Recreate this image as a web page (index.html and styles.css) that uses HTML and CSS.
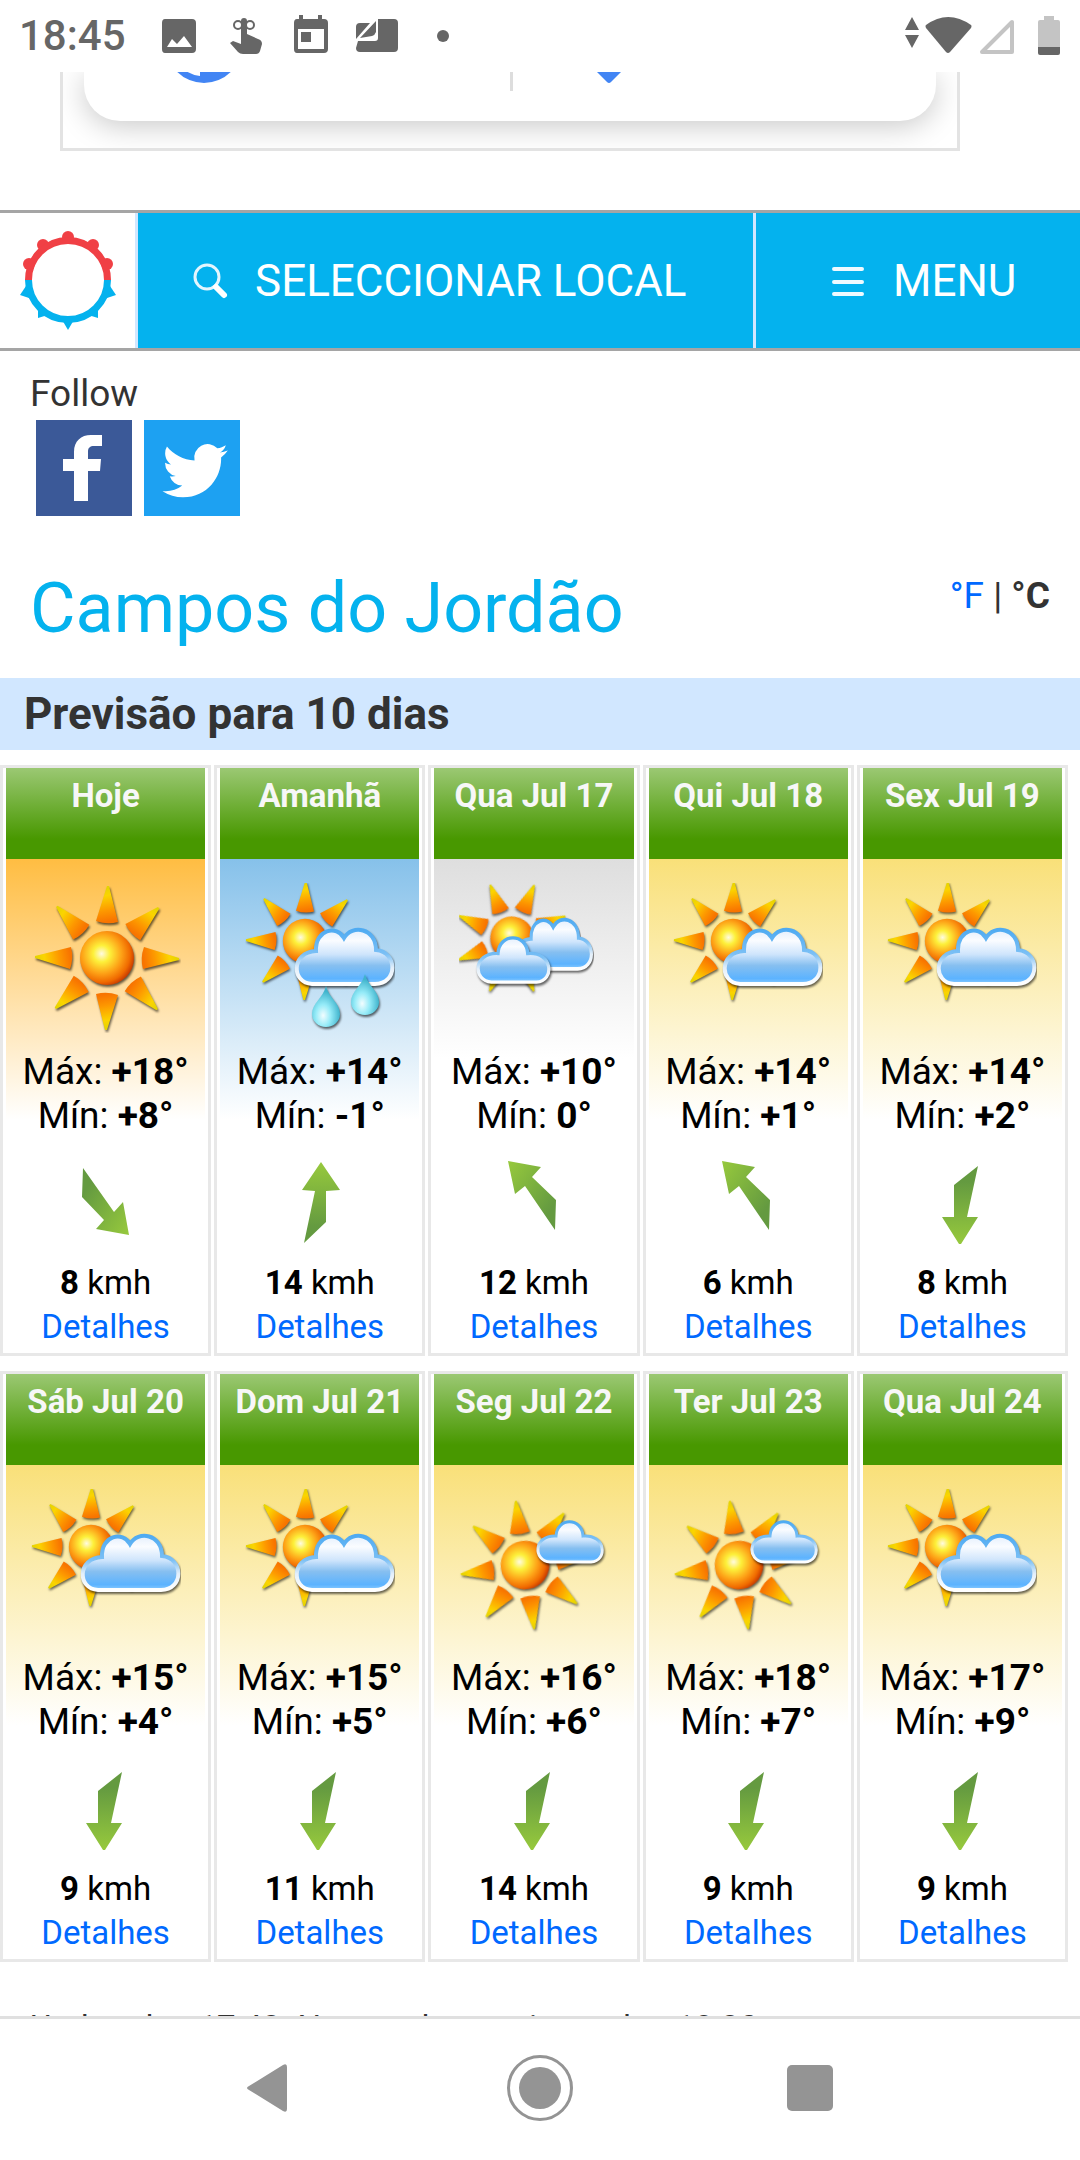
FILE: index.html
```
<!DOCTYPE html>
<html lang="pt">
<head>
    <meta charset="UTF-8">
    <meta name="viewport" content="width=device-width, initial-scale=1.0">
    <title>Campos do Jordão - Previsão para 10 dias</title>
    <link rel="stylesheet" href="styles.css">
</head>
<body>
    <!-- Shared shapes -->
    <svg class="sprite" aria-hidden="true">
        <defs>
            <radialGradient id="ball-fill" cx="0.4" cy="0.42" r="0.62">
                <stop offset="0" stop-color="#fffbe0"/>
                <stop offset="0.25" stop-color="#fdf03a"/>
                <stop offset="0.6" stop-color="#fda016"/>
                <stop offset="0.85" stop-color="#f06a00"/>
                <stop offset="1" stop-color="#c93c00"/>
            </radialGradient>
            <linearGradient id="ray-fill" x1="0" y1="0" x2="0.1" y2="1">
                <stop offset="0" stop-color="#dcd400"/>
                <stop offset="0.3" stop-color="#fbd400"/>
                <stop offset="0.7" stop-color="#fd9800"/>
                <stop offset="1" stop-color="#f87400"/>
            </linearGradient>
            <linearGradient id="cloud-fill" x1="0" y1="0" x2="0" y2="1">
                <stop offset="0" stop-color="#e4effd"/>
                <stop offset="0.2" stop-color="#fafcff"/>
                <stop offset="0.45" stop-color="#cfe5fc"/>
                <stop offset="0.66" stop-color="#86bff0"/>
                <stop offset="0.9" stop-color="#5cb3ff"/>
                <stop offset="1" stop-color="#8cccff"/>
            </linearGradient>
            <linearGradient id="cloud-edge" x1="0" y1="0" x2="0" y2="1">
                <stop offset="0" stop-color="#4fabf2"/>
                <stop offset="0.45" stop-color="#7cc0f5"/>
                <stop offset="0.7" stop-color="#e3effa"/>
                <stop offset="1" stop-color="#ffffff"/>
            </linearGradient>
            <radialGradient id="drop-fill" cx="0.4" cy="0.72" r="0.6">
                <stop offset="0" stop-color="#f2fdff"/>
                <stop offset="0.45" stop-color="#95ebf8"/>
                <stop offset="1" stop-color="#3fb3cc"/>
            </radialGradient>
            <linearGradient id="arrow-up" x1="0" y1="0" x2="0" y2="1">
                <stop offset="0" stop-color="#97c93d"/>
                <stop offset="0.3" stop-color="#84b83e"/>
                <stop offset="0.8" stop-color="#649a40"/>
            </linearGradient>
            <linearGradient id="arrow-down" x1="0" y1="1" x2="0" y2="0">
                <stop offset="0" stop-color="#97c93d"/>
                <stop offset="0.3" stop-color="#84b83e"/>
                <stop offset="0.8" stop-color="#649a40"/>
            </linearGradient>
            <linearGradient id="arrow-nw" x1="0" y1="0" x2="1" y2="1">
                <stop offset="0" stop-color="#97c93d"/>
                <stop offset="0.3" stop-color="#84b83e"/>
                <stop offset="0.8" stop-color="#649a40"/>
            </linearGradient>
            <linearGradient id="arrow-se" x1="1" y1="1" x2="0" y2="0">
                <stop offset="0" stop-color="#97c93d"/>
                <stop offset="0.3" stop-color="#84b83e"/>
                <stop offset="0.8" stop-color="#649a40"/>
            </linearGradient>

            <path id="ray" d="M0 -72H2L11 -36Q0 -33 -11 -37Z" fill="url(#ray-fill)"/>
            <g id="sun-shape">
                <g class="shade">
                    <use href="#ray"/>
                    <use href="#ray" transform="rotate(45)"/>
                    <use href="#ray" transform="rotate(90)"/>
                    <use href="#ray" transform="rotate(135)"/>
                    <use href="#ray" transform="rotate(180)"/>
                    <use href="#ray" transform="rotate(225)"/>
                    <use href="#ray" transform="rotate(270)"/>
                    <use href="#ray" transform="rotate(315)"/>
                    <circle r="27" fill="url(#ball-fill)"/>
                </g>
            </g>
            <path id="cloud-big" class="shade" fill="url(#cloud-fill)" stroke="url(#cloud-edge)" stroke-width="4" d="M67 101C46 100 46 69 71 68C70 46 92 42 99 55C107 41 131 45 131 67C153 69 153 101 130 101Z"/>
            <path id="cloud-small" class="shade" fill="url(#cloud-fill)" stroke="url(#cloud-edge)" stroke-width="3" d="M14 41C-3 40 -3 14 20 15C21 -4 46 -4 47 15C70 13 72 40 55 41Z"/>
            <path id="drop" class="shade" fill="url(#drop-fill)" d="M0 0C3 12 14 17 14 28A14 13 0 0 1 -14 28C-14 17 -3 12 0 0Z"/>
        </defs>

        <symbol id="w-sun" viewBox="0 0 150 150">
            <use href="#sun-shape" transform="translate(76 75)"/>
        </symbol>
        <symbol id="w-sun-cloud" viewBox="0 0 150 150">
            <use href="#sun-shape" transform="translate(60 58) scale(0.82)"/>
            <use href="#cloud-big"/>
        </symbol>
        <symbol id="w-rain" viewBox="0 0 150 150">
            <use href="#sun-shape" transform="translate(60 58) scale(0.82)"/>
            <use href="#cloud-big"/>
            <use href="#drop" transform="translate(81 103)"/>
            <use href="#drop" transform="translate(120 91)"/>
        </symbol>
        <symbol id="w-clouds" viewBox="0 0 150 150">
            <use href="#sun-shape" transform="translate(53 55) rotate(22) scale(0.8)"/>
            <use href="#cloud-big" transform="translate(16 -6) scale(0.79 0.91)"/>
            <use href="#cloud-small" transform="translate(17 54) scale(1.1)"/>
        </symbol>
        <symbol id="w-sun-small-cloud" viewBox="0 0 150 150">
            <use href="#sun-shape" transform="translate(66 76) rotate(-9) scale(0.9)"/>
            <use href="#cloud-small" transform="translate(77 32)"/>
        </symbol>

        <symbol id="wind-up" viewBox="0 0 84 84">
            <path fill="url(#arrow-up)" d="M43 2L62 30L48 31V62L26 83L37 31L24 30Z"/>
        </symbol>
        <symbol id="wind-down" viewBox="0 0 84 84">
            <path fill="url(#arrow-down)" d="M58 6L47 57L58 57L41 84H39L22 57L34 57V25Z"/>
        </symbol>
        <symbol id="wind-nw" viewBox="0 0 84 84">
            <path fill="url(#arrow-nw)" d="M16 1L49 7L40 17L64 40L63 70L33 26L23 34Z"/>
        </symbol>
        <symbol id="wind-se" viewBox="0 0 84 84">
            <path fill="url(#arrow-se)" d="M19 8L50 52L59 42L65 75L32 69L40 60L18 37Z"/>
        </symbol>
    </svg>

    <header class="status-bar">
        <span class="clock">18:45</span>
        <svg class="status-left" viewBox="0 0 290 44" aria-hidden="true">
            <g fill="#666">
                <path fill-rule="evenodd" d="M4 5H31Q35 5 35 9V35Q35 39 31 39H4Q1 39 1 35V9Q1 5 4 5ZM6 33H31L23 22L16 30L11 25Z"/>
                <path d="M80 20V7A3 3 0 0 1 86 7V20L97 25Q101 26 101 30L99 37Q98 40 95 40H82Q79 40 77 38L69 29L72 27L80 30Z"/>
                <path fill-rule="evenodd" d="M138 1H142V5H157V1H161V5H163Q167 5 167 9V35Q167 39 163 39H136Q133 39 133 35V9Q133 5 136 5H138ZM137 15V35H163V15ZM140 18H150V28H140Z"/>
                <path d="M195 25V13Q195 9 199 9H209ZM197 27H214Q217 27 217 24V5H233Q237 5 237 9V34Q237 38 233 38H199Q195 38 195 34ZM199 24L215 7V18Q214 21 211 22Z"/>
                <circle cx="282" cy="22" r="6"/>
            </g>
            <g fill="none" stroke="#666" stroke-width="2">
                <circle cx="77" cy="11" r="4"/>
                <circle cx="89" cy="11" r="4"/>
            </g>
        </svg>
        <svg class="status-right" viewBox="0 0 156 44" aria-hidden="true">
            <g fill="#666">
                <path d="M7 3L14 16H0ZM0 21H14L7 34Z"/>
                <path d="M21 11Q43 -5 66 11Q67 12 66 14L45 38Q43 40 41 38L21 14Q20 12 21 11Z"/>
            </g>
            <path d="M107 8V38H77Z" fill="none" stroke="#c4c4c4" stroke-width="4" stroke-linejoin="round"/>
            <path d="M139 2H149V6H153Q155 6 155 8V33H133V8Q133 6 135 6H139Z" fill="#c4c4c4"/>
            <path d="M133 33H155V39Q155 41 153 41H135Q133 41 133 39Z" fill="#666"/>
        </svg>
    </header>

    <main class="page">
        <div class="ad-frame">
            <div class="ad-card">
                <svg class="ad-icon" viewBox="0 0 80 12" aria-hidden="true">
                    <circle cx="40" cy="-27" r="38" fill="#4285f4"/>
                    <path d="M22 -1H36V4Q28 3 22 -1Z" fill="#fff"/>
                </svg>
                <span class="ad-divider"></span>
                <svg class="ad-icon" viewBox="0 0 80 12" aria-hidden="true">
                    <path d="M27 -1H53L42 10Q40 12 38 10Z" fill="#4285f4"/>
                </svg>
            </div>
        </div>

        <nav class="top-nav">
            <a class="brand" href="#" aria-label="Início">
                <svg viewBox="0 0 100 104" aria-hidden="true">
                    <g fill="#04b2ee">
                        <path d="M43 91L50 103L57 91Z"/>
                        <path d="M20 79V91L33 87Z"/>
                        <path d="M80 79V91L67 87Z"/>
                        <path d="M8 59L2 68L14 72Z"/>
                        <path d="M92 59L98 68L86 72Z"/>
                    </g>
                    <g fill="#f04045">
                        <circle cx="50" cy="10" r="6"/>
                        <circle cx="25" cy="18" r="6"/>
                        <circle cx="75" cy="18" r="6"/>
                        <circle cx="11" cy="37" r="6"/>
                        <circle cx="89" cy="37" r="6"/>
                    </g>
                    <path d="M10.5 53A39.5 39.5 0 0 1 89.5 53" fill="none" stroke="#f04045" stroke-width="7"/>
                    <path d="M10.5 53A39.5 39.5 0 0 0 89.5 53" fill="none" stroke="#04b2ee" stroke-width="7"/>
                </svg>
            </a>
            <button class="nav-btn nav-search" type="button">
                <svg viewBox="0 0 45 45" aria-hidden="true">
                    <circle cx="19" cy="19" r="12" fill="none" stroke="#e4f5fd" stroke-width="3"/>
                    <path d="M28 29L36 37" stroke="#fff" stroke-width="6" stroke-linecap="round"/>
                </svg>
                SELECCIONAR LOCAL
            </button>
            <button class="nav-btn nav-menu" type="button">
                <svg viewBox="0 0 45 45" aria-hidden="true">
                    <path d="M8 11H36M8 24H36M8 36H36" stroke="#f0faff" stroke-width="4" stroke-linecap="round"/>
                </svg>
                MENU
            </button>
        </nav>

        <section class="follow">
            <p>Follow</p>
            <div class="social">
                <a href="#" class="facebook" aria-label="Facebook">
                    <svg viewBox="0 0 96 96"><path fill="#fff" d="M38 81V51H27V39H38V32C38 21 45 15 55 15H66V26H58C54 26 52 28 52 31V39H65L64 51H52V81Z"/></svg>
                </a>
                <a href="#" class="twitter" aria-label="Twitter">
                    <svg viewBox="0 0 96 96"><path fill="#fff" transform="translate(18.5 18) scale(2.72)" d="M23.953 4.57a10 10 0 01-2.825.775 4.958 4.958 0 002.163-2.723c-.951.555-2.005.959-3.127 1.184a4.92 4.92 0 00-8.384 4.482C7.69 8.095 4.067 6.13 1.64 3.162a4.822 4.822 0 00-.666 2.475c0 1.71.87 3.213 2.188 4.096a4.904 4.904 0 01-2.228-.616v.06a4.923 4.923 0 003.946 4.827 4.996 4.996 0 01-2.212.085 4.936 4.936 0 004.604 3.417 9.867 9.867 0 01-6.102 2.105c-.39 0-.779-.023-1.17-.067a13.995 13.995 0 007.557 2.209c9.053 0 13.998-7.496 13.998-13.985 0-.21 0-.42-.015-.63A9.935 9.935 0 0024 4.59z"/></svg>
                </a>
            </div>
        </section>

        <div class="place">
            <h1>Campos do Jordão</h1>
            <p class="units"><a href="#">°F</a> | <b>°C</b></p>
        </div>

        <h2 class="band">Previsão para 10 dias</h2>

        <section class="days">
            <article class="day hot">
                <h3>Hoje</h3>
                <div class="day-body">
                    <svg class="weather"><use href="#w-sun"/></svg>
                    <p class="temp">Máx: <b>+18°</b></p>
                    <p class="temp">Mín: <b>+8°</b></p>
                    <svg class="wind"><use href="#wind-se"/></svg>
                    <p><b>8</b> kmh</p>
                    <a href="#">Detalhes</a>
                </div>
            </article>
            <article class="day rain">
                <h3>Amanhã</h3>
                <div class="day-body">
                    <svg class="weather"><use href="#w-rain"/></svg>
                    <p class="temp">Máx: <b>+14°</b></p>
                    <p class="temp">Mín: <b>-1°</b></p>
                    <svg class="wind"><use href="#wind-up"/></svg>
                    <p><b>14</b> kmh</p>
                    <a href="#">Detalhes</a>
                </div>
            </article>
            <article class="day cloudy">
                <h3>Qua Jul 17</h3>
                <div class="day-body">
                    <svg class="weather"><use href="#w-clouds"/></svg>
                    <p class="temp">Máx: <b>+10°</b></p>
                    <p class="temp">Mín: <b>0°</b></p>
                    <svg class="wind"><use href="#wind-nw"/></svg>
                    <p><b>12</b> kmh</p>
                    <a href="#">Detalhes</a>
                </div>
            </article>
            <article class="day">
                <h3>Qui Jul 18</h3>
                <div class="day-body">
                    <svg class="weather"><use href="#w-sun-cloud"/></svg>
                    <p class="temp">Máx: <b>+14°</b></p>
                    <p class="temp">Mín: <b>+1°</b></p>
                    <svg class="wind"><use href="#wind-nw"/></svg>
                    <p><b>6</b> kmh</p>
                    <a href="#">Detalhes</a>
                </div>
            </article>
            <article class="day">
                <h3>Sex Jul 19</h3>
                <div class="day-body">
                    <svg class="weather"><use href="#w-sun-cloud"/></svg>
                    <p class="temp">Máx: <b>+14°</b></p>
                    <p class="temp">Mín: <b>+2°</b></p>
                    <svg class="wind"><use href="#wind-down"/></svg>
                    <p><b>8</b> kmh</p>
                    <a href="#">Detalhes</a>
                </div>
            </article>
            <article class="day">
                <h3>Sáb Jul 20</h3>
                <div class="day-body">
                    <svg class="weather"><use href="#w-sun-cloud"/></svg>
                    <p class="temp">Máx: <b>+15°</b></p>
                    <p class="temp">Mín: <b>+4°</b></p>
                    <svg class="wind"><use href="#wind-down"/></svg>
                    <p><b>9</b> kmh</p>
                    <a href="#">Detalhes</a>
                </div>
            </article>
            <article class="day">
                <h3>Dom Jul 21</h3>
                <div class="day-body">
                    <svg class="weather"><use href="#w-sun-cloud"/></svg>
                    <p class="temp">Máx: <b>+15°</b></p>
                    <p class="temp">Mín: <b>+5°</b></p>
                    <svg class="wind"><use href="#wind-down"/></svg>
                    <p><b>11</b> kmh</p>
                    <a href="#">Detalhes</a>
                </div>
            </article>
            <article class="day">
                <h3>Seg Jul 22</h3>
                <div class="day-body">
                    <svg class="weather"><use href="#w-sun-small-cloud"/></svg>
                    <p class="temp">Máx: <b>+16°</b></p>
                    <p class="temp">Mín: <b>+6°</b></p>
                    <svg class="wind"><use href="#wind-down"/></svg>
                    <p><b>14</b> kmh</p>
                    <a href="#">Detalhes</a>
                </div>
            </article>
            <article class="day">
                <h3>Ter Jul 23</h3>
                <div class="day-body">
                    <svg class="weather"><use href="#w-sun-small-cloud"/></svg>
                    <p class="temp">Máx: <b>+18°</b></p>
                    <p class="temp">Mín: <b>+7°</b></p>
                    <svg class="wind"><use href="#wind-down"/></svg>
                    <p><b>9</b> kmh</p>
                    <a href="#">Detalhes</a>
                </div>
            </article>
            <article class="day">
                <h3>Qua Jul 24</h3>
                <div class="day-body">
                    <svg class="weather"><use href="#w-sun-cloud"/></svg>
                    <p class="temp">Máx: <b>+17°</b></p>
                    <p class="temp">Mín: <b>+9°</b></p>
                    <svg class="wind"><use href="#wind-down"/></svg>
                    <p><b>9</b> kmh</p>
                    <a href="#">Detalhes</a>
                </div>
            </article>
        </section>

        <p class="updated">Updated at 17:43. Next update estimated at 18:30</p>
    </main>

    <footer class="system-nav">
        <button type="button" aria-label="Voltar">
            <svg viewBox="0 0 72 72"><path d="M15 34L49 13Q53 11 53 15V57Q53 61 49 59L15 38Q11 36 15 34Z" fill="#949494"/></svg>
        </button>
        <button type="button" aria-label="Ecrã principal">
            <svg viewBox="0 0 72 72"><circle cx="36" cy="36" r="31.5" fill="none" stroke="#949494" stroke-width="3"/><circle cx="36" cy="36" r="21" fill="#949494"/></svg>
        </button>
        <button type="button" aria-label="Recentes">
            <svg viewBox="0 0 72 72"><rect x="13" y="13" width="46" height="46" rx="5" fill="#949494"/></svg>
        </button>
    </footer>
</body>
</html>
```

FILE: styles.css
```
:root {
    --sky: #04b2ee;
    --pale: #d1e7ff;
    --link: #0069ff;
    --line: #e8e8e8;
    --text: #333;
}

* {
    margin: 0;
    padding: 0;
    box-sizing: border-box;
}

body {
    height: 100vh;
    display: flex;
    flex-direction: column;
    background: #fff;
    color: var(--text);
    font-family: Roboto, sans-serif;
    font-size: 33px;
    line-height: 44px;
    overflow: hidden;
}

a {
    color: var(--link);
    text-decoration: none;
}

svg {
    display: block;
}

.sprite {
    position: absolute;
    width: 0;
    height: 0;
}

/* Status bar */
.status-bar {
    flex: none;
    display: flex;
    align-items: center;
    height: 72px;
    padding: 0 19px;
    color: #666;
}

.clock {
    font-size: 42px;
    font-weight: 500;
    margin-right: 35px;
}

.status-left {
    width: 290px;
    height: 44px;
}

.status-right {
    width: 156px;
    height: 44px;
    margin-left: auto;
}

.page {
    flex: 1;
    min-height: 0;
    overflow: hidden;
}

/* Ad */
.ad-frame {
    margin: 0 120px 59px 60px;
    padding: 0 21px 27px;
    border: 3px solid #e3e3e3;
    border-top: 0;
    overflow: hidden;
}

.ad-card {
    display: flex;
    justify-content: space-between;
    height: 49px;
    padding: 0 287px 0 80px;
    border-radius: 0 0 36px 36px;
    background: #fff;
    box-shadow: 0 5px 30px rgba(0, 0, 0, 0.22);
}

.ad-icon {
    width: 80px;
    height: 12px;
}

.ad-divider {
    width: 3px;
    height: 19px;
    margin-left: 209px;
    background: #ddd;
}

/* Top navigation */
.top-nav {
    display: flex;
    height: 141px;
    border-top: 3px solid #a5a5a5;
    border-bottom: 3px solid #a5a5a5;
}

.brand {
    flex: none;
    width: 138px;
    padding: 14px 0 0 18px;
    border-right: 3px solid var(--pale);
}

.brand svg {
    width: 100px;
    height: 104px;
}

.nav-btn {
    display: flex;
    align-items: center;
    gap: 22px;
    border: 0;
    background: var(--sky);
    color: #fff;
    font-family: inherit;
    font-size: 44px;
    white-space: nowrap;
    cursor: pointer;
}

.nav-btn svg {
    flex: none;
    width: 45px;
    height: 45px;
}

.nav-search {
    flex: 1;
    padding-left: 50px;
}

.nav-menu {
    width: 327px;
    padding-left: 70px;
    border-left: 3px solid var(--pale);
}

/* Follow */
.follow {
    padding: 21px 30px 0;
    font-size: 37px;
}

.social {
    display: flex;
    gap: 12px;
    padding: 4px 6px 0;
}

.social a {
    width: 96px;
    height: 96px;
}

.facebook {
    background: #3b5998;
}

.twitter {
    background: #1da1f2;
}

/* Place name */
.place {
    display: flex;
    justify-content: space-between;
    padding: 50px 30px 28px;
}

.place h1 {
    color: var(--sky);
    font-size: 70px;
    font-weight: 400;
    line-height: 84px;
}

.units {
    padding-top: 8px;
    font-size: 37px;
}

.band {
    padding: 0 24px;
    background: var(--pale);
    font-size: 44px;
    line-height: 72px;
}

/* Forecast */
.days {
    display: grid;
    grid-template-columns: repeat(5, 1fr);
    gap: 15px 3px;
    padding: 15px 12px 0 0;
}

.day {
    padding: 0 3px 4px;
    border: 3px solid var(--line);
    color: #000;
    text-align: center;
}

.day h3 {
    height: 91px;
    padding-top: 6px;
    background: linear-gradient(#9bc873, #489800 78%);
    color: #f7f7f7;
    font-size: 33px;
    white-space: nowrap;
}

.day-body {
    padding-top: 24px;
    background: linear-gradient(#f9e079, #fff 261px);
}

.hot .day-body {
    background: linear-gradient(#ffbd42, #fff 261px);
}

.rain .day-body {
    background: linear-gradient(#86c1ea, #fff 261px);
}

.cloudy .day-body {
    background: linear-gradient(#dedede, #fff 200px);
}

.day-body a {
    display: block;
}

.weather {
    width: 150px;
    height: 150px;
    margin: 0 auto 17px;
}

.shade {
    filter: drop-shadow(1px 2px 1px rgba(0, 0, 0, 0.6));
}

.temp {
    font-size: 37px;
}

.wind {
    width: 84px;
    height: 84px;
    margin: 22px auto 17px;
}

.updated {
    padding: 44px 30px 0;
}

/* System buttons */
.system-nav {
    flex: none;
    display: flex;
    justify-content: center;
    height: 144px;
    padding-bottom: 3px;
    border-top: 3px solid #e0e0e0;
}

.system-nav button {
    width: 25%;
    border: 0;
    background: none;
}

.system-nav svg {
    width: 72px;
    height: 72px;
    margin: 0 auto;
}
```
